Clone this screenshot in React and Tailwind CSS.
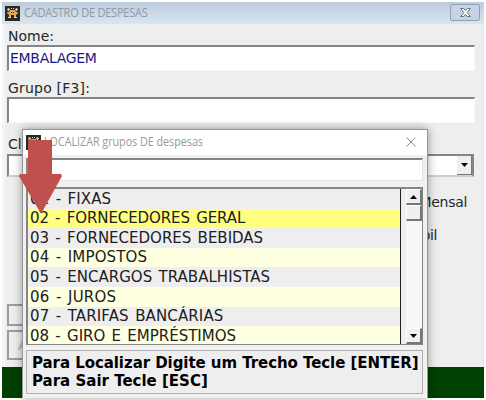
const rows = [
  ["01 - FIXAS", "tracking-[0.1px]"],
  ["02 - FORNECEDORES GERAL", "tracking-[-0.08px]"],
  ["03 - FORNECEDORES BEBIDAS", "tracking-[0px]"],
  ["04 - IMPOSTOS", "tracking-[0.15px]"],
  ["05 - ENCARGOS TRABALHISTAS", "tracking-[0.03px]"],
  ["06 - JUROS", "tracking-[0.2px]"],
  ["07 - TARIFAS BANCÁRIAS", "tracking-[0.13px]"],
  ["08 - GIRO E EMPRÉSTIMOS", "tracking-[0px]"],
];

function AppIcon() {
  return (
    <svg width="15" height="15" viewBox="0 0 15 15" className="shrink-0">
      <rect width="15" height="15" fill="#2b2725" />
      <path d="M2 3l2-1 1 2-2 1zM13 3l-2-1-1 2 2 1zM6 2h1v1H6zM8 2h1v1H8z" fill="#e9ddc8" />
      <path d="M5 4h5l1 2h2l-1 3-1-1v3H9V9H6v2H4V8L3 9 2 6h2z" fill="#dda85f" />
      <path d="M6 6h1v1H6zM8 6h1v1H8z" fill="#3a2819" />
      <path d="M3 11h3v1H3zM9 11h3v1H9z" fill="#efe0c4" />
    </svg>
  );
}

function Field({ children }) {
  return (
    <div className="flex h-[26px] w-[468px] shrink-0 items-center border-t-2 border-l-2 border-r border-b border-t-[#858585] border-l-[#858585] border-r-[#f8f8f8] border-b-[#f8f8f8] bg-white">
      {children}
    </div>
  );
}

function Arrow({ up }) {
  return (
    <svg width="7" height="4" viewBox="0 0 7 4">
      <path d={up ? "M0 4L3.5 0 7 4z" : "M0 0h7L3.5 4z"} fill="#000" />
    </svg>
  );
}

function ScrollButton({ children }) {
  return (
    <div className="flex h-[16px] w-full shrink-0 items-center justify-center border-r-2 border-b-2 border-l border-t border-t-white border-l-white border-r-[#777] border-b-[#777] bg-[#efefef]">
      {children}
    </div>
  );
}

export default function App() {
  return (
    <div className="relative h-[400px] w-[486px] overflow-hidden bg-white pt-[2px] font-['DejaVu_Sans',sans-serif] text-[14px] text-[#262626]">
      <div className="ml-[2px] flex h-[396px] w-[482px] flex-col bg-[#004000]">
        <div className="flex h-[22px] shrink-0 items-center bg-linear-to-b from-[#bccbdc] to-[#d9e6f2] pl-[3px]">
          <AppIcon />
          <span className="ml-[4px] origin-left scale-x-[0.925] font-['Open_Sans',sans-serif] text-[12px] tracking-[-0.3px] whitespace-nowrap text-[#8f98a2]">CADASTRO DE DESPESAS</span>
          <div className="mr-[4px] mb-[2px] ml-auto flex h-[17px] w-[30px] items-center justify-center rounded-[2px] border border-[#8f9fb4] bg-[#c5d3e2]">
            <svg width="11" height="9" viewBox="0 0 11 9">
              <path d="M.7.5h3L5.5 2.6 7.3.5h3L7.1 4.5l3.2 4h-3L5.5 6.3 3.7 8.5h-3l3.2-4z" fill="#fff" stroke="#6a7079" />
            </svg>
          </div>
        </div>
        <div className="flex h-[343px] shrink-0 flex-col border-l-[3px] border-r border-l-[#f3f5fa] border-r-[#e0e3f0] bg-[#eeeeee] pl-[2px]">
          <div className="flex h-[21px] items-center pt-[4px] pl-[1px]"><span>Nome:</span></div>
          <Field><span className="pl-[1px] tracking-[-0.3px] text-[#1b1780]">EMBALAGEM</span></Field>
          <div className="flex h-[26px] items-center pt-[8px] pl-[1px]"><span className="tracking-[0.2px]">Grupo [F3]:</span></div>
          <Field />
          <div className="flex h-[31px] items-center pt-[12px] pl-[1px]"><span>Classe:</span></div>
          <div className="flex h-[23px] w-[467px] shrink-0 border-2 border-[#858585] border-b-[#cfcfcf] bg-white">
            <div className="ml-auto flex w-[15px] items-center justify-center border-r border-b border-[#777] bg-[#efefef]"><Arrow /></div>
          </div>
          <div className="flex h-[49px] items-center justify-end pt-[1px] pr-[16px]"><span className="tracking-[-0.3px]">Mensal</span></div>
          <div className="flex h-[18px] items-center justify-end pt-[1px] pr-[46px]"><span className="tracking-[-0.4px]">Contábil</span></div>
          <div className="mt-[60px] h-[22px] w-[80px] border-2 border-[#9c9c9c]" />
          <div className="mt-[4px] flex h-[30px] w-[80px] items-center border-2 border-[#9c9c9c] pl-[9px] text-[#aaa]">Abrir</div>
        </div>
      </div>

      <div className="absolute top-[129px] left-[22px] flex h-[269px] w-[406px] flex-col border border-b-0 border-[#969696] bg-[#f0f0f0] shadow-[0_0_9px_rgba(0,0,0,0.38)]">
        <div className="flex h-[25px] shrink-0 items-center bg-white pb-[1px] pl-[3px]">
          <AppIcon />
          <span className="ml-[3px] origin-left scale-x-[0.893] font-['Open_Sans',sans-serif] text-[12px] whitespace-nowrap text-[#999]">LOCALIZAR grupos DE despesas</span>
          <svg width="10" height="10" viewBox="0 0 10 10" className="mr-[11px] ml-auto"><path d="M.5.5l9 9m0-9l-9 9" stroke="#888" /></svg>
        </div>
        <div className="mt-[3px] ml-[3px] h-[23px] w-[397px] shrink-0 border-t-2 border-l-2 border-r border-b border-t-[#858585] border-l-[#858585] border-r-[#e4e4e4] border-b-[#e4e4e4] bg-white" />
        <div className="mt-[6px] ml-[3px] flex h-[158px] w-[397px] shrink-0 border-t-2 border-r border-b border-l-2 border-[#858585] bg-[#efefef]">
          <div className="h-[155px] w-[373px] shrink-0 overflow-hidden border-r border-[#222] text-[15px] text-[#202020]">
            {rows.map(([label, tracking], i) => (
              <div key={label} className={`flex h-[19.6px] items-center pl-[2px] [word-spacing:1.5px] ${i === 1 ? "bg-[#ffff80]" : i % 2 ? "bg-[#ffffe1]" : "bg-[#eeeeee]"}`}>
                <span className={`whitespace-nowrap ${tracking}`}>{label}</span>
              </div>
            ))}
          </div>
          <div className="ml-[5px] flex grow flex-col bg-[#f7f7f7]">
            <ScrollButton><Arrow up /></ScrollButton>
            <ScrollButton />
            <div className="mt-auto"><ScrollButton><Arrow /></ScrollButton></div>
          </div>
        </div>
        <div className="mt-[5px] ml-[3px] flex h-[44px] w-[397px] shrink-0 flex-col border border-[#b0b0b0] bg-[#eeeeee] pt-[3px] pl-[5px] text-[15px] leading-[18px] font-bold text-black">
          <span className="tracking-[-0.06px] whitespace-nowrap">Para Localizar Digite um Trecho Tecle [ENTER]</span>
          <span>Para Sair Tecle [ESC]</span>
        </div>
      </div>

      <svg width="44" height="75" viewBox="0 0 44 75" className="absolute top-[140px] left-[19px]">
        <path d="M9 0h24v34h9l1 2L22.5 73h-1L0 36l1-2h8z" fill="#c0504d" />
      </svg>
    </div>
  );
}
